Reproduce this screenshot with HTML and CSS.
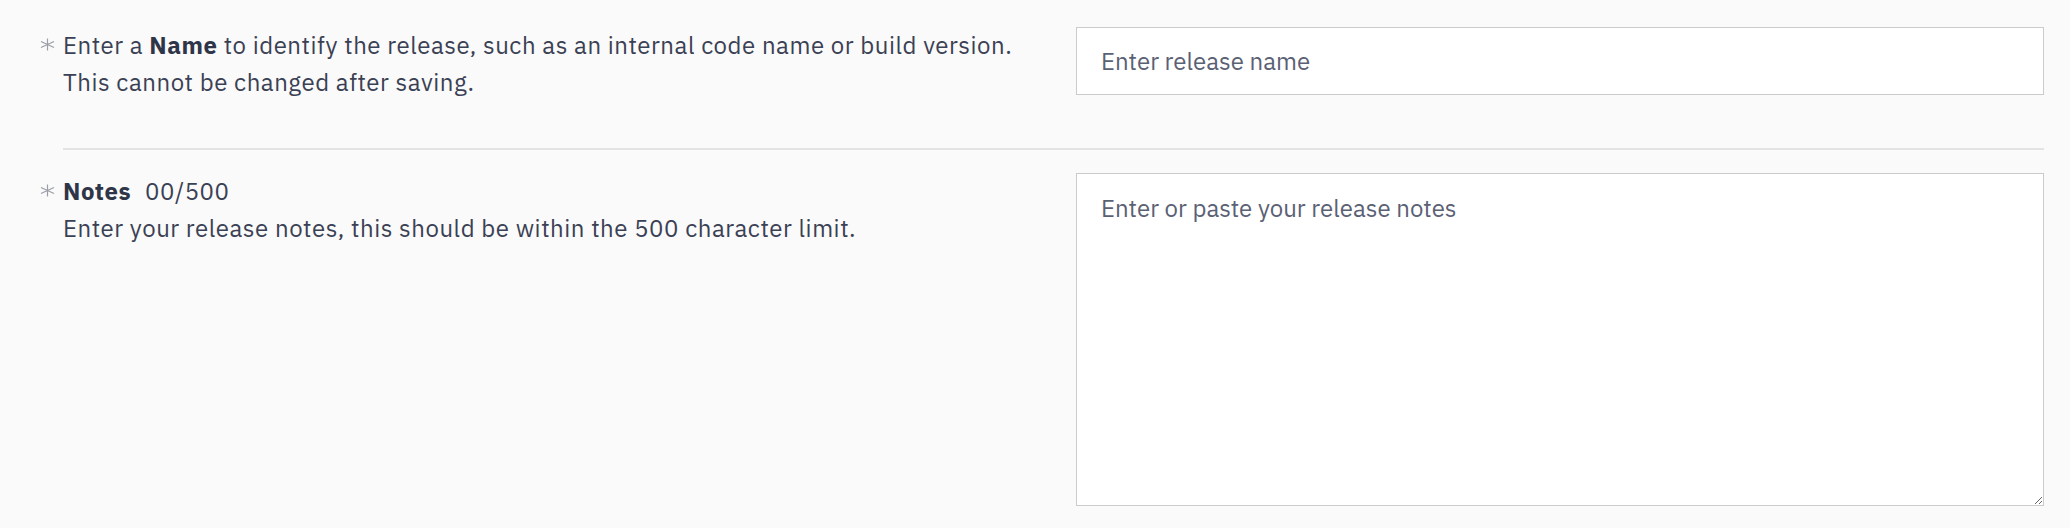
FILE: index.html
```html
<!DOCTYPE html>
<html lang="en">
<head>
<meta charset="utf-8">
<title>Release form</title>
<link rel="stylesheet" href="styles.css">
</head>
<body>
<form class="form">
  <div class="row">
    <div class="label">
      <span class="req"><svg width="15" height="13" viewBox="0 0 15 13"><path d="M7.5 0.5V12.5M1 3.5L14 9.5M1 9.5L14 3.5" stroke="#9a9ea6" stroke-width="1.2" fill="none"/></svg></span>
      <p class="text">Enter a <b>Name</b> to identify the release, such as an internal code name or build version.<br>This cannot be changed after saving.</p>
    </div>
    <div class="field">
      <input class="input" type="text" placeholder="Enter release name">
    </div>
  </div>
  <hr class="divider">
  <div class="row">
    <div class="label">
      <span class="req"><svg width="15" height="13" viewBox="0 0 15 13"><path d="M7.5 0.5V12.5M1 3.5L14 9.5M1 9.5L14 3.5" stroke="#9a9ea6" stroke-width="1.2" fill="none"/></svg></span>
      <div class="text">
        <p class="title"><b>Notes</b><span class="count">00/500</span></p>
        <p class="desc">Enter your release notes, this should be within the 500 character limit.</p>
      </div>
    </div>
    <div class="field">
      <textarea class="textarea" placeholder="Enter or paste your release notes"></textarea>
    </div>
  </div>
</form>
</body>
</html>
```
FILE: styles.css
```css
* { box-sizing: border-box; }
html, body { margin: 0; padding: 0; }
body {
  background: #fafafa;
  color: #3b4154;
  font-family: "IBM Plex Sans", Roboto, "Liberation Sans", sans-serif;
  font-size: 24px;
  line-height: 37px;
  height: 528px;
  overflow: hidden;
}
.form { padding: 27px 26px 0 40px; }
.row {
  display: grid;
  grid-template-columns: 1036px 968px;
  align-items: start;
}
.label { display: flex; align-items: flex-start; letter-spacing: 0.53px; }
.req { width: 23px; flex: none; padding-top: 11px; display: flex; }
.text { margin: 0; }
.text b { font-weight: 700; color: #2f3548; }
.title { margin: 0; }
.count { margin-left: 14px; }
.desc { margin: 0; }
.input, .textarea {
  display: block;
  width: 100%;
  background: #fff;
  border: 1px solid #cbcbcb;
  font: inherit;
  color: #3b4154;
  padding: 0 24px;
  outline: none;
  margin: 0;
}
.input { height: 68px; }
.textarea { height: 333px; padding-top: 16px; padding-bottom: 16px; resize: vertical; }
.input::placeholder, .textarea::placeholder { color: #5b6174; opacity: 1; }
.divider {
  border: 0;
  height: 2px;
  background: #e3e3e3;
  margin: 47px 0 23px 23px;
}
```
